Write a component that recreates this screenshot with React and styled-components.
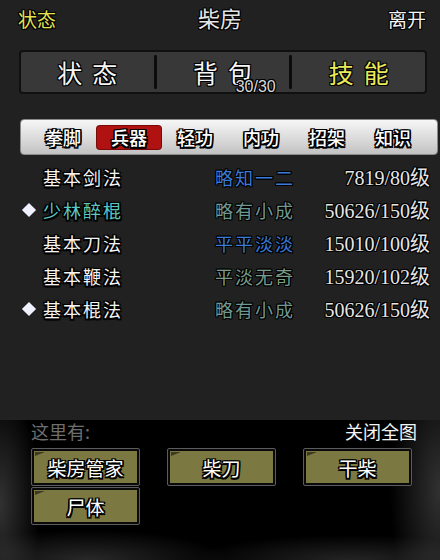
import React from "react";
import styled, { createGlobalStyle } from "styled-components";

const Global = createGlobalStyle`
  html, body { margin: 0; padding: 0; background: #000; }
  body { font-family: "Noto Sans CJK SC", "Noto Sans", sans-serif; }
`;

const outline = (c = "#000", w = 1) =>
  `${w}px 0 0 ${c}, -${w}px 0 0 ${c}, 0 ${w}px 0 ${c}, 0 -${w}px 0 ${c}, ${w}px ${w}px 0 ${c}, -${w}px -${w}px 0 ${c}, ${w}px -${w}px 0 ${c}, -${w}px ${w}px 0 ${c}`;

const Screen = styled.div`
  width: 440px;
  height: 560px;
  display: flex;
  flex-direction: column;
  overflow: hidden;
`;

const TopPanel = styled.div`
  height: 420px;
  background: #212121;
  display: flex;
  flex-direction: column;
`;

const Header = styled.div`
  height: 36px;
  display: flex;
  align-items: center;
  justify-content: space-between;
  padding: 0 14px 0 18px;
  position: relative;
`;

const HeaderText = styled.span`
  font-size: 19px;
  color: ${(p) => p.$color || "#f4f4f4"};
  text-shadow: ${outline("#000", 1)};
  line-height: 1;
`;

const HeaderTitle = styled(HeaderText)`
  position: absolute;
  left: 50%;
  transform: translateX(-50%);
  top: 6px;
  color: #e4e4e4;
  font-size: 22px;
`;

const TabBar = styled.div`
  margin: 14px 13px 0 19px;
  height: 44px;
  box-sizing: border-box;
  border: 2px solid #101010;
  border-radius: 4px;
  background: #383838;
  display: grid;
  grid-template-columns: 1fr 3px 1fr 3px 1fr;
  align-items: center;
`;

const TabDivider = styled.div`
  width: 3px;
  height: 34px;
  background: #0c0c0c;
  border-radius: 1px;
`;

const TabCell = styled.div`
  position: relative;
  height: 100%;
  display: flex;
  align-items: center;
  justify-content: center;
`;

const TabLabel = styled.span`
  font-size: 25px;
  letter-spacing: 10px;
  margin-right: -10px;
  color: ${(p) => (p.$active ? "#eaea5a" : "#f6f6f6")};
  text-shadow: ${outline("#000", 1)};
  line-height: 1;
`;

const Badge = styled.span`
  position: absolute;
  left: 79px;
  top: 27px;
  font-family: "Liberation Sans", "Noto Sans", sans-serif;
  font-size: 16px;
  color: #d8d8d8;
  text-shadow: ${outline("#000", 1)};
  line-height: 1;
`;

const SubBar = styled.div`
  margin: 25px 2px 0 20px;
  height: 36px;
  box-sizing: border-box;
  border: 1px solid #8a8a8a;
  border-radius: 4px;
  background: linear-gradient(#f6f6f6, #d8d8d8 60%, #c2c2c2);
  display: flex;
  align-items: center;
  padding-left: 9px;
`;

const SubTab = styled.div`
  width: 66px;
  display: flex;
  justify-content: center;
`;

const SubLabel = styled.span`
  font-size: 18px;
  font-weight: 500;
  line-height: 23px;
  height: 23px;
  padding: 0 ${(p) => (p.$active ? 14 : 0)}px;
  border-radius: 3px;
  background: ${(p) => (p.$active ? "#b01212" : "transparent")};
  box-shadow: ${(p) => (p.$active ? "0 0 0 1px #7a0a0a" : "none")};
  color: #fff;
  text-shadow: ${outline("#000", 1.5)};
`;

const List = styled.div`
  margin-top: 5px;
  display: flex;
  flex-direction: column;
`;

const Row = styled.div`
  height: 33px;
  display: grid;
  grid-template-columns: 21px 172px 1fr auto;
  align-items: center;
  padding: 0 10px 0 22px;
  font-family: "Liberation Serif", "Noto Sans CJK SC", serif;
  font-size: 18px;
`;

const Diamond = styled.span`
  width: 10px;
  height: 10px;
  background: #f0f0ff;
  transform: rotate(45deg);
  margin-left: 2px;
`;

const Name = styled.span`
  color: ${(p) => p.$color};
  letter-spacing: 2px;
  text-shadow: ${outline("#000", 1.5)}, 0 0 3px #000;
`;

const Level = styled.span`
  color: ${(p) => p.$color};
  letter-spacing: 2px;
  text-shadow: ${outline("#000", 1)};
`;

const Progress = styled.span`
  color: #e6e6e6;
  font-size: 20px;
  text-shadow: ${outline("#000", 1)};
`;

const Bottom = styled.div`
  flex: 1;
  background:
    radial-gradient(ellipse 40px 120px at 0% 60%, rgba(110,110,110,0.45), transparent),
    radial-gradient(ellipse 50px 140px at 100% 50%, rgba(110,110,110,0.45), transparent),
    radial-gradient(ellipse 140px 30px at 20% 100%, rgba(90,90,90,0.45), transparent),
    radial-gradient(ellipse 160px 25px at 80% 100%, rgba(90,90,90,0.4), transparent),
    #000;
  padding: 0 23px 0 31px;
  display: flex;
  flex-direction: column;
`;

const BottomHead = styled.div`
  height: 22px;
  display: flex;
  align-items: center;
  justify-content: space-between;
`;

const HereText = styled.span`
  font-size: 18px;
  color: #6e6e6e;
  line-height: 1;
`;

const CloseText = styled.span`
  font-size: 18px;
  color: #f4f4f4;
  line-height: 1;
`;

const Npcs = styled.div`
  margin-top: 6px;
  display: grid;
  grid-template-columns: repeat(3, 109px);
  column-gap: 27px;
  row-gap: 1px;
`;

const NpcButton = styled.div`
  position: relative;
  height: 38px;
  box-sizing: border-box;
  border: 1px solid #5c5c5c;
  border-radius: 2px;
  background: #0a0a0a;
  padding: 2px;
  display: flex;

  &::after {
    content: "";
    position: absolute;
    left: 3px;
    top: 3px;
    width: 10px;
    height: 4px;
    background: #3c3a22;
    clip-path: polygon(0 0, 100% 0, 0 100%);
  }
`;

const NpcFace = styled.div`
  flex: 1;
  background: #7b7842;
  display: flex;
  align-items: center;
  justify-content: center;
  font-size: 19px;
  color: #fff;
  text-shadow: ${outline("#000", 1.5)};
`;

const skills = [
  { mark: false, name: "基本剑法", nameColor: "#f4f4f4", level: "略知一二", levelColor: "#3a7ad8", prog: "7819/80级" },
  { mark: true, name: "少林醉棍", nameColor: "#5cc8c4", level: "略有小成", levelColor: "#6f9994", prog: "50626/150级" },
  { mark: false, name: "基本刀法", nameColor: "#f4f4f4", level: "平平淡淡", levelColor: "#3a7ad8", prog: "15010/100级" },
  { mark: false, name: "基本鞭法", nameColor: "#f4f4f4", level: "平淡无奇", levelColor: "#7a9c8a", prog: "15920/102级" },
  { mark: true, name: "基本棍法", nameColor: "#f4f4f4", level: "略有小成", levelColor: "#6f9994", prog: "50626/150级" },
];

const subTabs = ["拳脚", "兵器", "轻功", "内功", "招架", "知识"];
const npcs = ["柴房管家", "柴刀", "干柴", "尸体"];

export default function App() {
  return (
    <Screen>
      <Global />
      <TopPanel>
        <Header>
          <HeaderText $color="#e6e44e">状态</HeaderText>
          <HeaderTitle>柴房</HeaderTitle>
          <HeaderText>离开</HeaderText>
        </Header>
        <TabBar>
          <TabCell><TabLabel>状态</TabLabel></TabCell>
          <TabDivider />
          <TabCell>
            <TabLabel>背包</TabLabel>
            <Badge>30/30</Badge>
          </TabCell>
          <TabDivider />
          <TabCell><TabLabel $active>技能</TabLabel></TabCell>
        </TabBar>
        <SubBar>
          {subTabs.map((t) => (
            <SubTab key={t}>
              <SubLabel $active={t === "兵器"}>{t}</SubLabel>
            </SubTab>
          ))}
        </SubBar>
        <List>
          {skills.map((s) => (
            <Row key={s.name}>
              {s.mark ? <Diamond /> : <span />}
              <Name $color={s.nameColor}>{s.name}</Name>
              <Level $color={s.levelColor}>{s.level}</Level>
              <Progress>{s.prog}</Progress>
            </Row>
          ))}
        </List>
      </TopPanel>
      <Bottom>
        <BottomHead>
          <HereText>这里有:</HereText>
          <CloseText>关闭全图</CloseText>
        </BottomHead>
        <Npcs>
          {npcs.map((n) => (
            <NpcButton key={n}>
              <NpcFace>{n}</NpcFace>
            </NpcButton>
          ))}
        </Npcs>
      </Bottom>
    </Screen>
  );
}
